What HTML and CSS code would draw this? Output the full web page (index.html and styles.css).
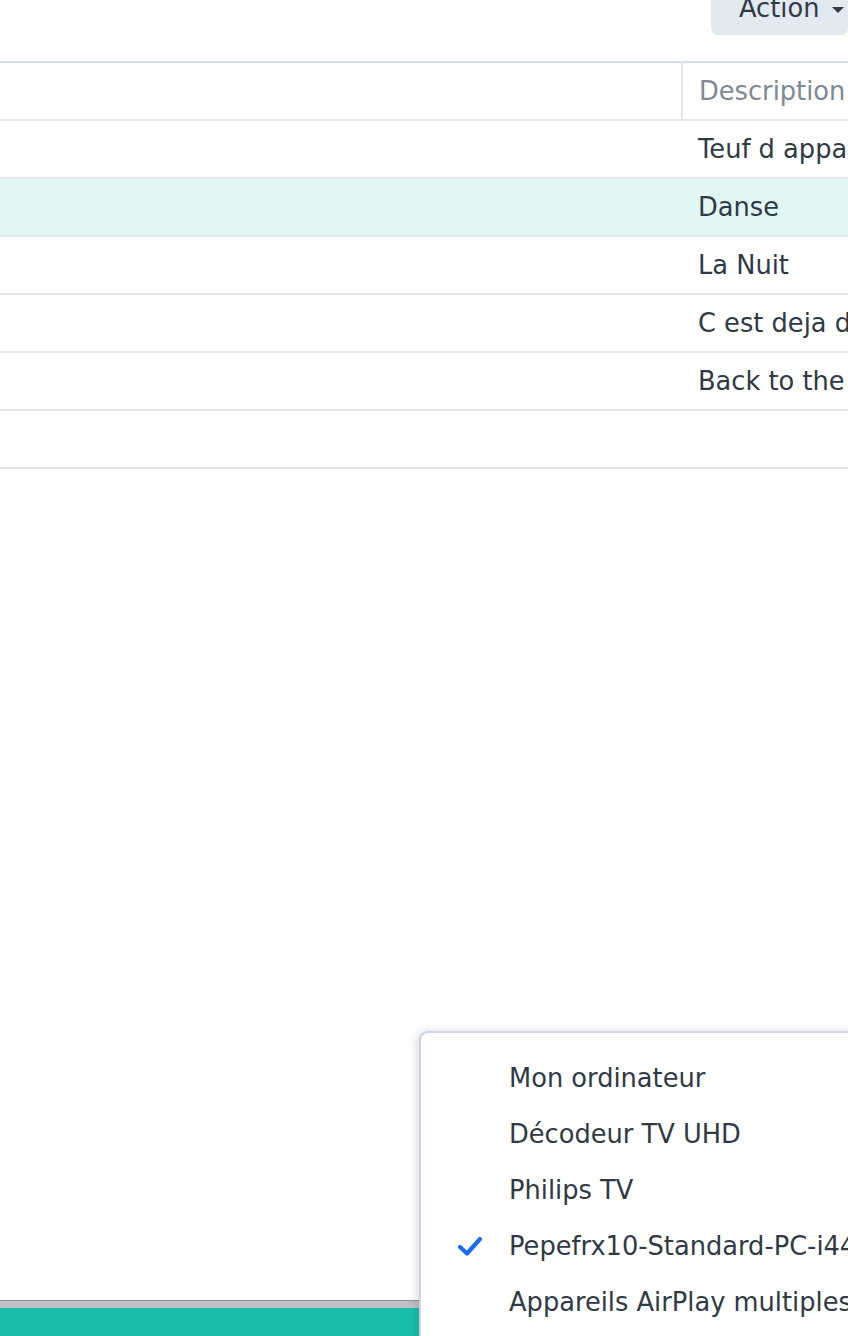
FILE: index.html
```html
<!DOCTYPE html>
<html lang="fr">

<head>
    <meta charset="UTF-8">
    <meta name="viewport" content="width=device-width, initial-scale=1.0">
    <title>Audio Station</title>
    <link rel="stylesheet" href="styles.css">
</head>

<body>
    <div class="page">
        <div class="toolbar">
            <button class="action-btn">Action <span class="caret"></span></button>
        </div>

        <table class="song-list">
            <thead>
                <tr>
                    <th class="col-title"></th>
                    <th class="col-desc">Description</th>
                </tr>
            </thead>
            <tbody>
                <tr>
                    <td></td>
                    <td>Teuf d appart</td>
                </tr>
                <tr class="selected">
                    <td></td>
                    <td>Danse</td>
                </tr>
                <tr>
                    <td></td>
                    <td>La Nuit</td>
                </tr>
                <tr>
                    <td></td>
                    <td>C est deja demain</td>
                </tr>
                <tr>
                    <td></td>
                    <td>Back to the future</td>
                </tr>
                <tr>
                    <td></td>
                    <td></td>
                </tr>
            </tbody>
        </table>

        <div class="spacer"></div>

        <div class="player-bar">
            <div class="progress"></div>
            <div class="player"></div>
        </div>
    </div>

    <ul class="device-menu">
        <li>Mon ordinateur</li>
        <li>Décodeur TV UHD</li>
        <li>Philips TV</li>
        <li class="checked">
            <svg class="check" width="26" height="22" viewBox="0 0 26 22">
                <path d="M3 12 L10 18.5 L23 4" fill="none" stroke="#1a6ff0" stroke-width="4.2" stroke-linecap="round" stroke-linejoin="round" />
            </svg>
            Pepefrx10-Standard-PC-i440FX-PIIX-1996
        </li>
        <li>Appareils AirPlay multiples</li>
    </ul>
</body>

</html>
```

FILE: styles.css
```css
html,
body {
    margin: 0;
    height: 1336px;
    overflow: hidden;
}

body {
    font-family: "DejaVu Sans", Verdana, sans-serif;
    font-size: 25.7px;
    color: #2f3a45;
    background-color: white;
    position: relative;
}

.page {
    display: flex;
    flex-direction: column;
    height: 1336px;
}

.toolbar {
    height: 61px;
    display: flex;
    justify-content: flex-start;
}

.action-btn {
    margin-left: 711px;
    margin-top: -16px;
    height: 51px;
    width: 160px;
    padding: 0 0 3px 28px;
    text-align: left;
    border: none;
    border-radius: 7px;
    background-color: #e3e9f0;
    font-family: inherit;
    font-size: 25.7px;
    color: #2f3a45;
    white-space: nowrap;
}

.caret {
    display: inline-block;
    width: 0;
    height: 0;
    margin-left: 4px;
    vertical-align: middle;
    border-left: 6px solid transparent;
    border-right: 6px solid transparent;
    border-top: 6px solid #2f3a45;
}

.song-list {
    width: 100%;
    border-collapse: collapse;
    table-layout: fixed;
    border-top: 2px solid #d2dce6;
}

.song-list th,
.song-list td {
    height: 56px;
    padding: 0 0 0 16px;
    border-bottom: 2px solid #e2e7ec;
    text-align: left;
    font-weight: normal;
    white-space: nowrap;
    overflow: hidden;
}

.song-list th {
    color: #808891;
}

.col-title {
    width: 665px;
    border-right: 2px solid #e2e7ec;
}

.song-list tr.selected td {
    background-color: #e1f7f4;
}

.spacer {
    flex: 1;
}

.player-bar {
    height: 36px;
}

.progress {
    height: 7px;
    background-color: #c0c1c7;
    border-top: 1px solid #8f9197;
}

.player {
    height: 28px;
    background-color: #19bea9;
}

.device-menu {
    position: absolute;
    left: 419px;
    top: 1031px;
    width: 600px;
    height: 400px;
    margin: 0;
    padding: 17px 0 0 0;
    list-style: none;
    background-color: white;
    border: 2px solid #cbd6e2;
    border-radius: 9px;
    box-shadow: -3px 0 8px rgba(0, 0, 0, 0.12);
}

.device-menu li {
    position: relative;
    height: 56px;
    line-height: 56px;
    padding-left: 88px;
    white-space: nowrap;
}

.check {
    position: absolute;
    left: 36px;
    top: 17px;
}
```
